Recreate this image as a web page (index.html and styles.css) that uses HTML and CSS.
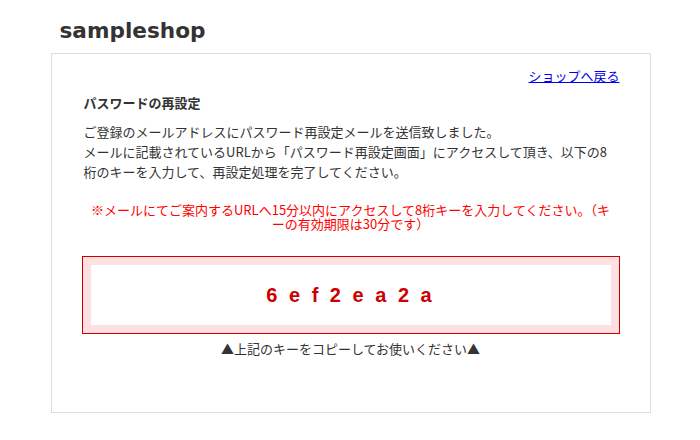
FILE: index.html
```html
<!DOCTYPE html>
<html lang="ja">
<head>
<meta charset="UTF-8">
<title>パスワードの再設定 | sampleshop</title>
<link rel="stylesheet" href="styles.css">
</head>
<body>
<div class="wrap">
<h1 class="logo">sampleshop</h1>
<div class="panel">
<p class="back"><a href="#">ショップへ戻る</a></p>
<h2 class="title">パスワードの再設定</h2>
<p class="lead">ご登録のメールアドレスにパスワード再設定メールを送信致しました。<br>メールに記載されているURLから「パスワード再設定画面」にアクセスして頂き、以下の8桁のキーを入力して、再設定処理を完了してください。</p>
<p class="notice">※メールにてご案内するURLへ15分以内にアクセスして8桁キーを入力してください。（キーの有効期限は30分です）</p>
<div class="key-box">
<div class="key">6 e f 2 e a 2 a</div>
</div>
<p class="caption">▲上記のキーをコピーしてお使いください▲</p>
</div>
</div>
</body>
</html>
```

FILE: styles.css
```css
* {box-sizing: border-box;margin: 0;padding: 0;}
body {background: #fff;color: #333;font-family: "Noto Sans CJK JP", "DejaVu Sans", sans-serif;font-size: 13px;}
.wrap {width: 601px;margin: 0 auto;padding-left: 1px;}
.logo {font-family: "DejaVu Sans", sans-serif;font-weight: bold;font-size: 21.6px;line-height: 30px;color: #333;padding: 16px 0 7px 9px;}
.panel {border: 1px solid #ddd;padding: 14px 30px 0 30px;height: 360px;}
.back {text-align: right;line-height: 16px;}
.back a {color: #00e;}
.title {font-size: 13px;font-weight: bold;line-height: 16px;margin-top: 11px;padding-left: 2px;}
.lead {line-height: 20px;margin-top: 11px;padding: 0 3px 0 2px;}
.notice {color: #f00;text-align: center;line-height: 14px;margin-top: 21px;padding: 0 6px;}
.key-box {margin-top: 25px;border: 1px solid #c00;background: #ffe0e0;padding: 8px;}
.key {background: #fff;height: 60px;display: flex;align-items: center;justify-content: center;font-family: "Liberation Sans", Arial, sans-serif;font-weight: bold;font-size: 20px;letter-spacing: 3px;color: #c00;}
.caption {text-align: center;line-height: 16px;margin-top: 7px;}
```
